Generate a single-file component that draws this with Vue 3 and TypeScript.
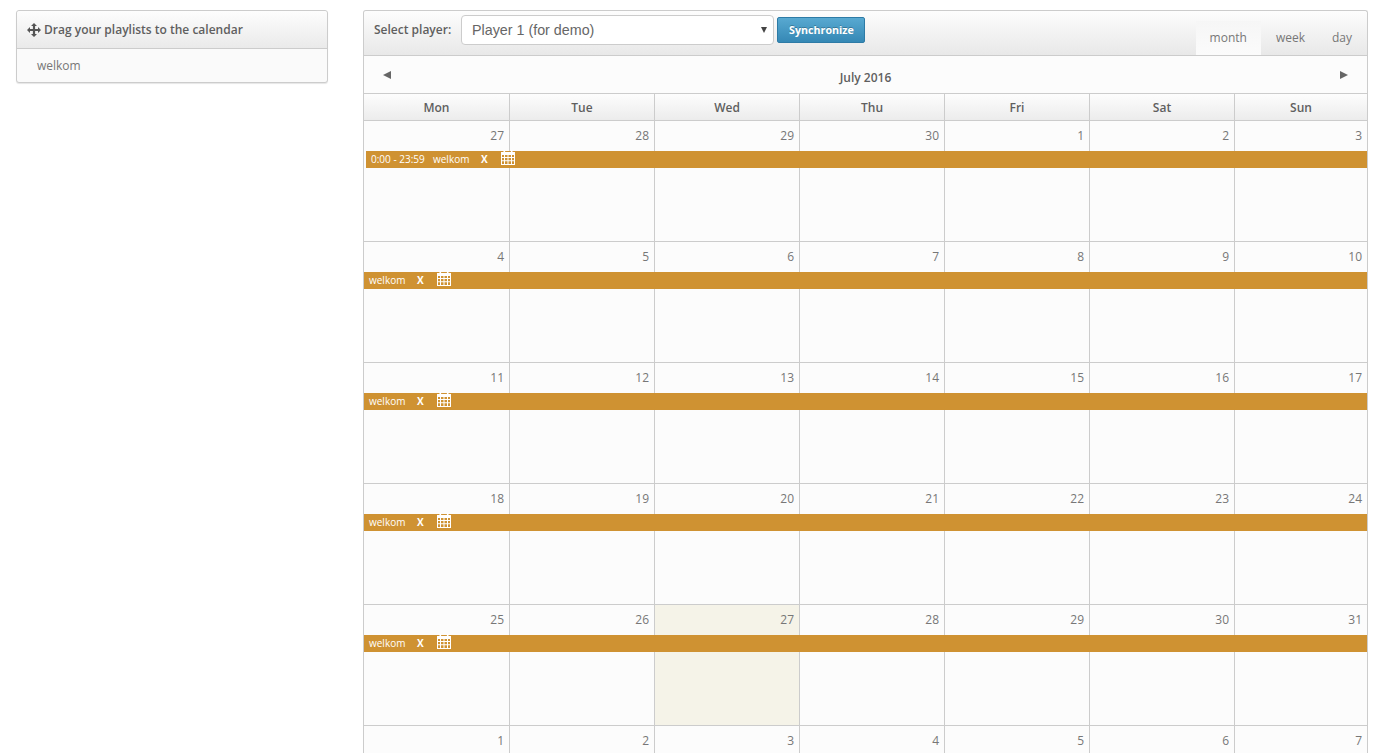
<script setup lang="ts">
interface Day { n: number; today?: boolean }
const heads = ['Mon', 'Tue', 'Wed', 'Thu', 'Fri', 'Sat', 'Sun']
const starts: number[][] = [
  [27, 28, 29, 30, 1, 2, 3],
  [4, 5, 6, 7, 8, 9, 10],
  [11, 12, 13, 14, 15, 16, 17],
  [18, 19, 20, 21, 22, 23, 24],
  [25, 26, 27, 28, 29, 30, 31],
  [1, 2, 3, 4, 5, 6, 7],
]
const weeks = starts.map((w, i) => ({
  days: w.map((n, j): Day => ({ n, today: i === 4 && j === 2 })),
  bar: i < 5,
  first: i === 0,
}))
</script>

<template>
  <div class="page">
    <aside class="side">
      <div class="side-head">
        <svg class="move" viewBox="0 0 14 14" width="14" height="14">
          <path d="M7 0 10 3H8.1V5.9H11V4L14 7 11 10V8.1H8.1V11H10L7 14 4 11H5.9V8.1H3V10L0 7 3 4V5.9H5.9V3H4Z" fill="#555" />
        </svg>
        <span>Drag your playlists to the calendar</span>
      </div>
      <div class="side-body">welkom</div>
    </aside>

    <main class="cal">
      <div class="toolbar">
        <label class="sel-label">Select player:</label>
        <div class="select">
          <span>Player 1 (for demo)</span>
          <i class="caret"></i>
        </div>
        <button class="sync">Synchronize</button>
        <div class="tabs">
          <span class="tab active">month</span>
          <span class="tab">week</span>
          <span class="tab">day</span>
        </div>
      </div>

      <div class="title-row">
        <i class="tri left"></i>
        <span class="title">July 2016</span>
        <i class="tri right"></i>
      </div>

      <div class="grid head">
        <div v-for="h in heads" :key="h" class="hcell">{{ h }}</div>
      </div>

      <div v-for="(w, i) in weeks" :key="i" class="grid week">
        <div v-for="d in w.days" :key="d.n" class="cell" :class="{ today: d.today }">{{ d.n }}</div>
        <div v-if="w.bar" class="bar" :class="{ first: w.first }">
          <span v-if="w.first" class="time">0:00 - 23:59</span>
          <span class="name">welkom</span>
          <b class="x">X</b>
          <svg class="calicon" viewBox="0 0 14 15" width="14" height="15">
            <path fill="#fff" fill-rule="evenodd" d="M2.5 0h1.6v2h5.8V0h1.6v2H14v13H0V2h2.5ZM1 5v2h2V5Zm3 0v2h2.5V5Zm3.5 0v2H10V5ZM11 5v2h2V5ZM1 8v2.2h2V8Zm3 0v2.2h2.5V8Zm3.5 0v2.2H10V8ZM11 8v2.2h2V8ZM1 11.2V14h2v-2.8Zm3 0V14h2.5v-2.8Zm3.5 0V14H10v-2.8Zm3.5 0V14h2v-2.8Z" />
          </svg>
        </div>
      </div>
    </main>
  </div>
</template>

<style>
html, body { margin: 0; overflow: hidden; background: #fff; }
</style>

<style scoped>
.page {
  height: 753px;
  overflow: hidden;
  display: flex;
  align-items: flex-start;
  gap: 35px;
  padding: 10px 15px 0 16px;
  box-sizing: border-box;
  font-family: "Open Sans", "Liberation Sans", sans-serif;
  color: #666;
  background: #fff;
}
.side {
  width: 312px;
  flex: none;
  box-sizing: border-box;
  border: 1px solid #ccc;
  border-radius: 3px;
  background: #fafafa;
  box-shadow: 0 1px 1px rgba(0, 0, 0, 0.1);
}
.side-head {
  height: 37px;
  display: flex;
  align-items: center;
  gap: 3px;
  padding-left: 10px;
  border-bottom: 1px solid #ccc;
  background: linear-gradient(#fdfdfd, #eaeaea);
  font-size: 12px;
  font-weight: 600;
  color: #5f5f5f;
  border-radius: 3px 3px 0 0;
}
.side-body {
  height: 33px;
  line-height: 33px;
  padding-left: 20px;
  font-size: 12px;
  color: #777;
}
.cal {
  width: 1005px;
  flex: none;
  box-sizing: border-box;
  border: 1px solid #ccc;
  border-bottom: none;
  border-radius: 3px 3px 0 0;
  background: #fcfcfc;
}
.toolbar {
  height: 44px;
  display: flex;
  align-items: flex-start;
  border-bottom: 1px solid #ccc;
  background: linear-gradient(#fdfdfd, #e8e8e8);
  border-radius: 3px 3px 0 0;
}
.sel-label {
  margin: 11px 0 0 10px;
  width: 87px;
  font-size: 12px;
  line-height: 16px;
  font-weight: 600;
  color: #5f5f5f;
}
.select {
  margin-top: 4px;
  width: 313px;
  height: 30px;
  box-sizing: border-box;
  border: 1px solid #ccc;
  border-radius: 4px;
  background: #fff;
  display: flex;
  align-items: center;
  justify-content: space-between;
  padding: 0 6px 0 10px;
  font-family: "Liberation Sans", Arial, sans-serif;
  font-size: 14.3px;
  color: #666;
}
.caret {
  width: 0;
  height: 0;
  border-left: 3.5px solid transparent;
  border-right: 3.5px solid transparent;
  border-top: 6px solid #444;
}
.sync {
  margin: 6px 0 0 3px;
  width: 88px;
  height: 26px;
  box-sizing: border-box;
  padding: 0 0 0 1px;
  border: 1px solid #2d7ba6;
  border-radius: 2px;
  background: linear-gradient(#58a9d1, #3588b5);
  color: #fff;
  font-family: "Open Sans", sans-serif;
  font-size: 10.7px;
  font-weight: 700;
  text-shadow: 0 -1px 0 rgba(0, 0, 0, 0.25);
}
.tabs {
  margin-left: auto;
  margin-right: 1px;
  align-self: flex-end;
  display: flex;
  height: 34px;
}
.tab {
  font-size: 12px;
  line-height: 34px;
  color: #777;
  padding: 0 14px;
}
.tab:nth-child(2) { padding-left: 15px; }
.tab:nth-child(3) { padding: 0 14px 0 13px; }
.tab.active { background: linear-gradient(#f6f6f6, #fbfbfb); }
.title-row {
  height: 38px;
  position: relative;
  display: flex;
  align-items: flex-start;
  justify-content: space-between;
  padding: 15px 19px 0 19px;
  box-sizing: border-box;
  border-bottom: 1px solid #ccc;
}
.title {
  position: absolute;
  left: 0;
  right: 0;
  top: 14px;
  text-align: center;
  font-size: 12px;
  line-height: 16px;
  font-weight: 600;
  color: #5f5f5f;
}
.tri {
  width: 0;
  height: 0;
  border-top: 4px solid transparent;
  border-bottom: 4px solid transparent;
}
.tri.left { border-right: 8px solid #666; }
.tri.right { border-left: 8px solid #666; }
.grid {
  display: grid;
  grid-template-columns: 146px 145px 145px 145px 145px 145px 1fr;
  position: relative;
}
.head {
  height: 26px;
  background: linear-gradient(#fdfdfd, #ececec);
}
.hcell {
  border-right: 1px solid #ccc;
  text-align: center;
  font-size: 12px;
  line-height: 27px;
  font-weight: 600;
  color: #5f5f5f;
}
.hcell:last-child { border-right: none; }
.week {
  height: 121px;
  box-sizing: border-box;
  border-top: 1px solid #ccc;
}
.cell {
  border-right: 1px solid #ccc;
  padding: 7px 5px 0 0;
  text-align: right;
  font-size: 12px;
  line-height: 16px;
  color: #777;
}
.cell:nth-child(7) { border-right: none; }
.cell.today { background: #f5f3e8; }
.bar {
  position: absolute;
  left: 0;
  right: 0;
  top: 30px;
  height: 17px;
  box-sizing: border-box;
  background: #cf9232;
  display: flex;
  align-items: center;
  padding: 0 0 2px 5px;
  font-size: 10px;
  color: #fff;
}
.bar.first { left: 2px; }
.time { width: 62px; }
.name { width: 48px; }
.x { font-size: 10px; font-weight: 700; width: 20px; }
.calicon { align-self: flex-start; margin-top: -1px; }
.move { flex: none; }
</style>
